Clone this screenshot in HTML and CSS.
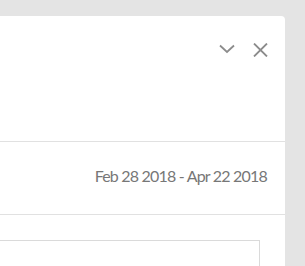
FILE: index.html
```html
<!DOCTYPE html>
<html lang="en">
<head>
    <meta charset="UTF-8">
    <meta name="viewport" content="width=device-width, initial-scale=1.0">
    <title>Report Panel</title>
    <link rel="stylesheet" href="styles.css">
</head>
<body>
    <div class="panel">
        <div class="panel-header">
            <button class="icon-btn" aria-label="Collapse">
                <svg width="16" height="10" viewBox="0 0 16 10"><path d="M1 1.5 L8 8 L15 1.5" fill="none" stroke="#8c8c8c" stroke-width="1.8"/></svg>
            </button>
            <button class="icon-btn" aria-label="Close">
                <svg width="15" height="14" viewBox="0 0 15 14"><path d="M1 0.5 L14 13.5 M14 0.5 L1 13.5" fill="none" stroke="#8c8c8c" stroke-width="1.8"/></svg>
            </button>
        </div>

        <!-- date range -->
        <div class="date-row">Feb 28 2018 - Apr 22 2018</div>

        <div class="panel-body">
            <div class="chart-box"></div>
        </div>
    </div>
</body>
</html>
```

FILE: styles.css
```css
body {
    margin: 0;
    background: #e4e4e4;
    font-family: Lato, "Open Sans", sans-serif;
    overflow: hidden;
}
.panel {
    margin: 16px 0 0 -40px;
    width: 325px;
    height: 250px;
    overflow: hidden;
    background: #fff;
    border-top-right-radius: 4px;
}
.panel-header {
    height: 126px;
    display: flex;
    justify-content: flex-end;
    align-items: flex-start;
    gap: 18px;
    padding: 27px 17px 0 0;
    box-sizing: border-box;
    border-bottom: 1px solid #e1e1e1;
}
.icon-btn {
    background: none;
    border: none;
    padding: 0;
    cursor: pointer;
    display: flex;
}
.icon-btn:first-child {
    margin-top: 1px;
}
.date-row {
    height: 73px;
    box-sizing: border-box;
    padding: 24px 18px 0 0;
    text-align: right;
    font-size: 16px;
    letter-spacing: -0.8px;
    color: #777;
    border-bottom: 1px solid #e1e1e1;
}
.panel-body {
    padding: 25px 25px 0 0;
}
.chart-box {
    height: 100px;
    border: 1px solid #dadada;
}
```
